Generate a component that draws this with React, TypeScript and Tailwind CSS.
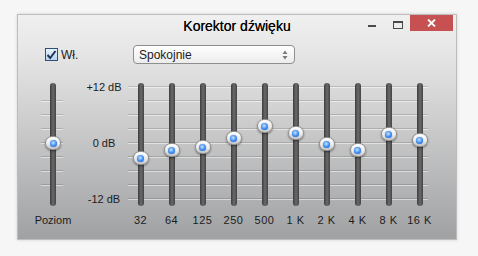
import React from "react";

const font = { fontFamily: '"Liberation Sans", Arial, sans-serif' };

const bands: { label: string; y: number }[] = [
  { label: "32", y: 75 },
  { label: "64", y: 67 },
  { label: "125", y: 64 },
  { label: "250", y: 55 },
  { label: "500", y: 43 },
  { label: "1 K", y: 50 },
  { label: "2 K", y: 61 },
  { label: "4 K", y: 67 },
  { label: "8 K", y: 51 },
  { label: "16 K", y: 57 },
];

function Line({ w }: { w: string }) {
  return (
    <div className={`${w} h-[2px] flex flex-col`}>
      <div className="h-[1px] bg-[rgba(0,0,0,0.14)]" />
      <div className="h-[1px] bg-[rgba(255,255,255,0.5)]" />
    </div>
  );
}

function Knob({ y }: { y: number }) {
  return (
    <div
      className="absolute left-1/2 -ml-[8px] w-[16px] h-[14px] rounded-full border border-[#8f8f8f] bg-[linear-gradient(to_bottom,#ffffff,#ededed_55%,#c6c6c6)] shadow-[0_1px_2px_rgba(0,0,0,0.45)] flex items-center justify-center"
      style={{ top: y - 7 }}
    >
      <div className="w-[7px] h-[7px] rounded-full bg-[radial-gradient(circle_at_45%_40%,#c4e6ff,#3a8af2_55%,#1658d0)] shadow-[0_0_1px_rgba(0,40,120,0.6)]" />
    </div>
  );
}

function Track() {
  return (
    <div className="w-[6px] h-full rounded-full bg-[linear-gradient(to_right,#3c3c3c,#6a6a6a_50%,#444444)]" />
  );
}

export default function App() {
  return (
    <div className="w-[478px] h-[256px] bg-[#f6f6f6] pt-[14px] pl-[17px]" style={font}>
      <div className="w-[440px] h-[226px] border border-[#bdbdbd] bg-[linear-gradient(to_bottom,#f0f0f0_0%,#e2e2e2_22%,#a0a1a3_100%)] shadow-[0_0_3px_rgba(0,0,0,0.15)] flex flex-col">
        {/* Title bar */}
        <div className="h-[20px] grid grid-cols-[1fr_auto_1fr]">
          <div />
          <div className="text-[14px] leading-[20px] mt-[1px] text-black whitespace-nowrap [text-shadow:0_0_0.4px_rgba(0,0,0,0.8)]">
            Korektor dźwięku
          </div>
          <div className="flex justify-end pr-[3px]">
            <div className="w-[26px] h-[16px] flex items-center justify-center pt-[6px]">
              <div className="w-[8px] h-[2px] bg-[#4a4a4a]" />
            </div>
            <div className="w-[25px] h-[16px] flex items-center justify-center pt-[3px]">
              <div className="w-[10px] h-[8px] border border-[#4a4a4a] border-t-2" />
            </div>
            <div className="w-[43px] h-[16px] bg-[#c75050] flex items-center justify-center">
              <svg width="9" height="8" viewBox="0 0 9 8">
                <path d="M1 0.5 L8 7.5 M8 0.5 L1 7.5" stroke="#ffffff" strokeWidth="1.8" />
              </svg>
            </div>
          </div>
        </div>

        {/* Controls row */}
        <div className="mt-[10px] h-[19px] flex items-center pl-[27px]">
          <div className="w-[88px] flex items-center gap-[3px]">
            <div className="w-[13px] h-[13px] border border-[#2f4f78] bg-[linear-gradient(to_bottom,#e9f2fc,#b9d2ee)] flex items-center justify-center">
              <svg width="11" height="10" viewBox="0 0 11 10">
                <path d="M1.5 5 L4.2 8 L9.5 1" stroke="#1d3557" strokeWidth="2" fill="none" />
              </svg>
            </div>
            <span className="text-[12px] text-[#1c1c1c] leading-none">Wł.</span>
          </div>
          <div className="w-[162px] h-[19px] rounded-[4px] border border-[#8e8e8e] bg-[linear-gradient(to_bottom,#ffffff,#ececec)] flex items-center justify-between pl-[5px] pr-[6px]">
            <span className="text-[12px] text-[#1c1c1c] leading-none">Spokojnie</span>
            <svg width="6" height="10" viewBox="0 0 6 10">
              <path d="M3 0.5 L5.5 4 L0.5 4 Z M0.5 6 L5.5 6 L3 9.5 Z" fill="#7a7a7a" />
            </svg>
          </div>
        </div>

        {/* Slider area */}
        <div className="mt-[19px] h-[123px] flex pl-[23px]">
          {/* Poziom */}
          <div className="relative w-[24px] h-full">
            <div className="absolute left-0 top-[17px] h-[86px] flex flex-col justify-between">
              {Array.from({ length: 7 }).map((_, i) => (
                <Line key={i} w="w-[22px]" />
              ))}
            </div>
            <div className="relative h-full flex justify-center">
              <Track />
              <Knob y={60} />
            </div>
          </div>

          {/* dB labels */}
          <div className="ml-[19px] w-[40px] h-full pb-[3px] flex flex-col justify-between items-center text-[11px] text-[#1c1c1c]">
            <div className="h-[8px] leading-[8px] whitespace-nowrap">+12 dB</div>
            <div className="h-[8px] leading-[8px] whitespace-nowrap">0 dB</div>
            <div className="h-[8px] leading-[8px] whitespace-nowrap">-12 dB</div>
          </div>

          {/* EQ */}
          <div className="ml-[1px] relative w-[310px] h-full">
            <div className="absolute left-[3px] top-[3px] h-[114px] flex flex-col justify-between">
              {Array.from({ length: 9 }).map((_, i) => (
                <Line key={i} w="w-[300px]" />
              ))}
            </div>
            <div className="relative flex h-full">
              {bands.map((b) => (
                <div key={b.label} className="relative w-[31px] h-full flex justify-center">
                  <Track />
                  <Knob y={b.y} />
                </div>
              ))}
            </div>
          </div>
        </div>

        {/* Labels row */}
        <div className="mt-[7px] h-[14px] flex pl-[23px] text-[11px] leading-[14px] text-[#1c1c1c]">
          <div className="w-[24px] flex justify-center whitespace-nowrap">Poziom</div>
          <div className="ml-[19px] w-[40px]" />
          <div className="ml-[1px] flex">
            {bands.map((b) => (
              <div key={b.label} className="w-[31px] flex justify-center whitespace-nowrap tracking-[0.5px]">
                {b.label}
              </div>
            ))}
          </div>
        </div>
      </div>
    </div>
  );
}
